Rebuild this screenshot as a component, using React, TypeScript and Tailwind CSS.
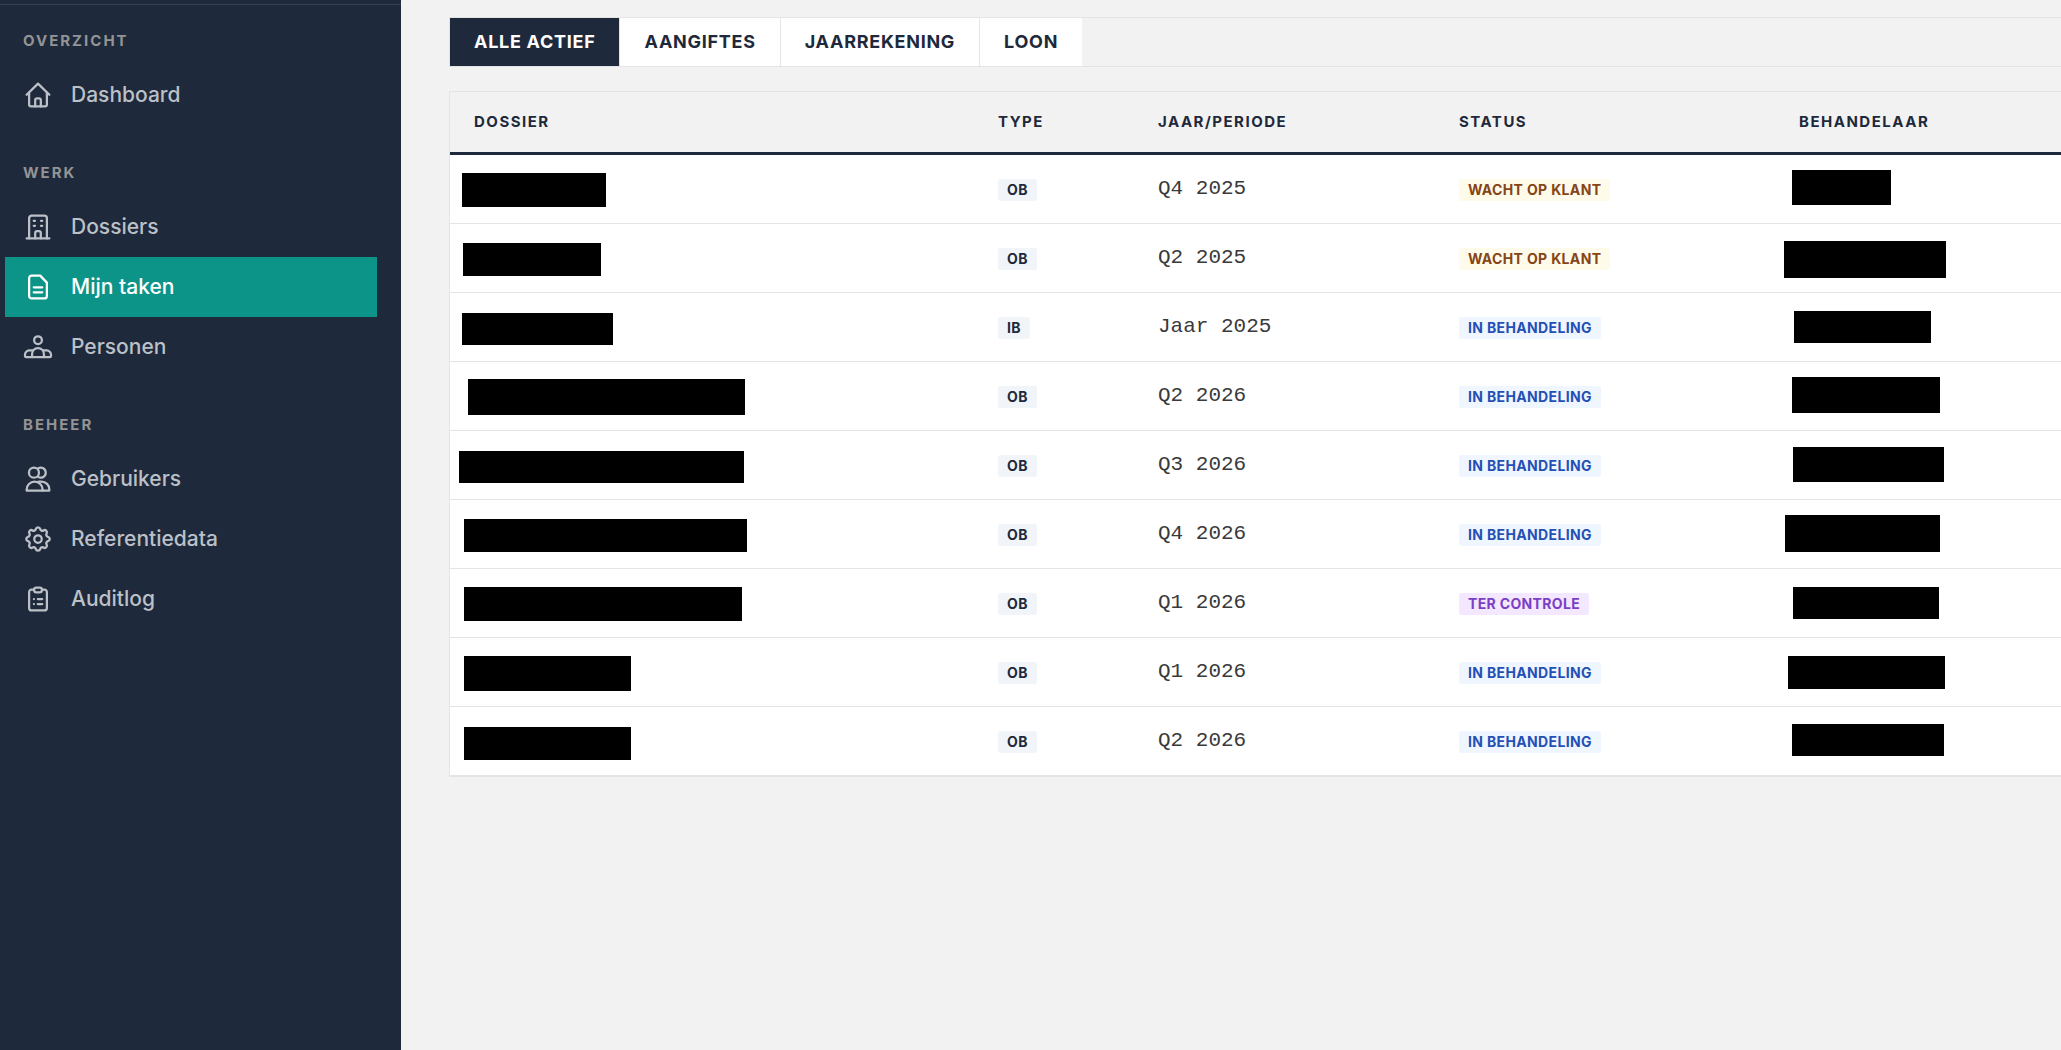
import React, { useState } from 'react';
import clsx from 'clsx';

type Status = 'wacht' | 'behandeling' | 'controle';

// Afgeschermde naam: positie en afmeting binnen de cel
interface Mask {
  left: number;
  top: number;
  width: number;
  height: number;
}

interface Taak {
  id: number;
  type: string;
  periode: string;
  status: Status;
  dossier: Mask;
  behandelaar: Mask;
}

const statusConfig: Record<Status, { label: string; className: string }> = {
  wacht: { label: 'Wacht op klant', className: 'bg-[#fffbeb] text-[#854516]' },
  behandeling: { label: 'In behandeling', className: 'bg-[#eff6ff] text-[#2450b5]' },
  controle: { label: 'Ter controle', className: 'bg-[#f3e8ff] text-[#7a3fc4]' },
};

const mask = (left: number, top: number, width: number, height: number): Mask => ({ left, top, width, height });

const taken: Taak[] = [
  { id: 1, type: 'OB', periode: 'Q4 2025', status: 'wacht', dossier: mask(12, 18, 144, 34), behandelaar: mask(17, 15, 99, 35) },
  { id: 2, type: 'OB', periode: 'Q2 2025', status: 'wacht', dossier: mask(13, 19, 138, 33), behandelaar: mask(9, 17, 162, 37) },
  { id: 3, type: 'IB', periode: 'Jaar 2025', status: 'behandeling', dossier: mask(12, 20, 151, 32), behandelaar: mask(19, 18, 137, 32) },
  { id: 4, type: 'OB', periode: 'Q2 2026', status: 'behandeling', dossier: mask(18, 17, 277, 36), behandelaar: mask(17, 15, 148, 36) },
  { id: 5, type: 'OB', periode: 'Q3 2026', status: 'behandeling', dossier: mask(9, 20, 285, 32), behandelaar: mask(18, 16, 151, 35) },
  { id: 6, type: 'OB', periode: 'Q4 2026', status: 'behandeling', dossier: mask(14, 19, 283, 33), behandelaar: mask(10, 15, 155, 37) },
  { id: 7, type: 'OB', periode: 'Q1 2026', status: 'controle', dossier: mask(14, 18, 278, 34), behandelaar: mask(18, 18, 146, 32) },
  { id: 8, type: 'OB', periode: 'Q1 2026', status: 'behandeling', dossier: mask(14, 18, 167, 35), behandelaar: mask(13, 18, 157, 33) },
  { id: 9, type: 'OB', periode: 'Q2 2026', status: 'behandeling', dossier: mask(14, 20, 167, 33), behandelaar: mask(17, 17, 152, 32) },
];

const Icon: React.FC<{ children: React.ReactNode }> = ({ children }) => (
  <svg
    viewBox="0 0 24 24"
    className="size-[30px] shrink-0"
    fill="none"
    stroke="currentColor"
    strokeWidth={1.8}
    strokeLinecap="round"
    strokeLinejoin="round"
    aria-hidden="true"
  >
    {children}
  </svg>
);

const HomeIcon = () => (
  <Icon>
    <path d="M2.9 11.75 12 2.9l9.1 8.85" />
    <path d="M4.9 10v9.6c0 .83.67 1.5 1.5 1.5h11.2c.83 0 1.5-.67 1.5-1.5V10" />
    <path d="M9.75 21.1v-4.85c0-.83.67-1.5 1.5-1.5h1.5c.83 0 1.5.67 1.5 1.5v4.85" />
  </Icon>
);

const BuildingIcon = () => (
  <Icon>
    <path d="M2.9 21.1h18.2" />
    <path d="M4.9 21.1V4.9a2 2 0 0 1 2-2h10.2a2 2 0 0 1 2 2v16.2" />
    <path d="M9.75 21.1v-4.35c0-.83.67-1.5 1.5-1.5h1.5c.83 0 1.5.67 1.5 1.5v4.35" />
    <path d="M8.6 7h1M14.4 7h1M8.6 11h1M14.4 11h1" />
  </Icon>
);

const PageIcon = () => (
  <Icon>
    <path d="M4.9 4.9a2 2 0 0 1 2-2h6.85l5.35 5.6v10.6a2 2 0 0 1-2 2H6.9a2 2 0 0 1-2-2z" />
    <path d="M8.6 12.25h6.8M8.6 16.25h6.8" />
  </Icon>
);

const PeopleIcon = () => (
  <Icon>
    <circle cx="12" cy="6.5" r="3.1" />
    <path d="M7.25 20.1v-2.5a4.75 4.75 0 0 1 9.5 0v2.5" />
    <path d="M7.5 14.75H5a3.4 3.4 0 0 0-3.4 3.4v.95c0 .55.45 1 1 1h18.8c.55 0 1-.45 1-1v-.95a3.4 3.4 0 0 0-3.4-3.4h-2.5" />
  </Icon>
);

const UsersIcon = () => (
  <Icon>
    <circle cx="8.75" cy="6.9" r="4" />
    <path d="M12.25 3.4a4 4 0 1 1 0 7" />
    <path d="M2.9 21.25v-.75a6.4 6.4 0 0 1 12.8 0v.75z" />
    <path d="M12.5 14h2.2a6.4 6.4 0 0 1 6.4 6.5v.75h-5.4" />
  </Icon>
);

const GearIcon = () => (
  <Icon>
    <circle cx="12" cy="12" r="3" />
    <path
      transform="translate(-.48 -.48) scale(1.04)"
      d="M10.325 4.317c.426-1.756 2.924-1.756 3.35 0a1.724 1.724 0 0 0 2.573 1.066c1.543-.94 3.31.826 2.37 2.37a1.724 1.724 0 0 0 1.065 2.572c1.756.426 1.756 2.924 0 3.35a1.724 1.724 0 0 0-1.066 2.573c.94 1.543-.826 3.31-2.37 2.37a1.724 1.724 0 0 0-2.572 1.065c-.426 1.756-2.924 1.756-3.35 0a1.724 1.724 0 0 0-2.573-1.066c-1.543.94-3.31-.826-2.37-2.37a1.724 1.724 0 0 0-1.065-2.572c-1.756-.426-1.756-2.924 0-3.35a1.724 1.724 0 0 0 1.066-2.573c-.94-1.543.826-3.31 2.37-2.37.996.608 2.296.07 2.572-1.065z"
    />
  </Icon>
);

const ClipboardIcon = () => (
  <Icon>
    <path d="M8.75 4.4H6.9a2 2 0 0 0-2 2v12.7a2 2 0 0 0 2 2h10.2a2 2 0 0 0 2-2V6.4a2 2 0 0 0-2-2h-1.85" />
    <rect x="8.9" y="2.9" width="6.2" height="3.8" rx="1.75" />
    <path d="M8.75 12h.01M11.85 12h3.55M8.75 16h.01M11.85 16h3.55" />
  </Icon>
);

const secties = [
  { titel: 'Overzicht', items: [{ naam: 'Dashboard', icon: HomeIcon }] },
  {
    titel: 'Werk',
    items: [
      { naam: 'Dossiers', icon: BuildingIcon },
      { naam: 'Mijn taken', icon: PageIcon },
      { naam: 'Personen', icon: PeopleIcon },
    ],
  },
  {
    titel: 'Beheer',
    items: [
      { naam: 'Gebruikers', icon: UsersIcon },
      { naam: 'Referentiedata', icon: GearIcon },
      { naam: 'Auditlog', icon: ClipboardIcon },
    ],
  },
];

const tabs = ['Alle actief', 'Aangiftes', 'Jaarrekening', 'Loon'];

const Sidebar: React.FC = () => (
  <aside className="w-[401px] shrink-0 bg-[#1e293b] pt-1">
    <nav className="flex flex-col gap-[39px] border-t border-[#334155] pt-[27px] pr-6 pl-[5px]">
      {secties.map((sectie) => (
        <div key={sectie.titel}>
          <h2 className="mb-[15px] px-[18px] text-[15px] leading-[18px] font-bold tracking-[2px] text-[#949494] uppercase">
            {sectie.titel}
          </h2>
          <ul>
            {sectie.items.map(({ naam, icon: ItemIcon }) => (
              <li key={naam}>
                <a
                  href="#"
                  className={clsx(
                    'flex h-[60px] items-center gap-[18px] px-[18px] text-[21px] font-medium',
                    naam === 'Mijn taken' ? 'bg-[#0d9488] text-white' : 'text-[#bcc0c7]'
                  )}
                >
                  <ItemIcon />
                  {naam}
                </a>
              </li>
            ))}
          </ul>
        </div>
      ))}
    </nav>
  </aside>
);

const MaskedCell: React.FC<{ area: Mask }> = ({ area }) => (
  <td className="relative">
    <span className="absolute bg-black" style={area} />
  </td>
);

const App: React.FC = () => {
  const [activeTab, setActiveTab] = useState(tabs[0]);

  return (
    <div className="flex min-h-screen overflow-x-hidden bg-[#f2f2f2] font-['Inter',sans-serif] text-[#1e293b]">
      <Sidebar />

      <main className="min-w-0 flex-1 pt-[17px] pl-12">
        {/* Filters */}
        <div className="flex border-y border-l border-[#e4e4e4]">
          {tabs.map((tab, index) => (
            <button
              key={tab}
              type="button"
              onClick={() => setActiveTab(tab)}
              className={clsx(
                'h-12 px-6 pb-0.5 text-[18px] font-bold tracking-[0.04em] uppercase',
                index < tabs.length - 1 && 'border-r border-[#e4e4e4]',
                tab === activeTab ? 'bg-[#1e293b] text-white' : 'bg-white'
              )}
            >
              {tab}
            </button>
          ))}
        </div>

        {/* Takenlijst */}
        <div className="mt-6 border-y border-l border-[#e4e4e4] bg-white">
          <table className="w-full table-fixed border-separate border-spacing-0 text-left">
            <thead className="bg-[#f2f2f2] text-[15px] tracking-widest uppercase">
              <tr className="h-[63px] *:border-b-[3px] *:border-[#1e293b] *:px-6 *:font-bold">
                <th className="w-[524px]">Dossier</th>
                <th className="w-[160px]">Type</th>
                <th className="w-[301px]">Jaar/Periode</th>
                <th className="w-[340px]">Status</th>
                <th>Behandelaar</th>
              </tr>
            </thead>
            <tbody>
              {taken.map((taak) => (
                <tr key={taak.id} className="h-[69px] *:border-b *:border-[#e4e4e4] *:px-6">
                  <MaskedCell area={taak.dossier} />
                  <td>
                    <span className="inline-block rounded-xs bg-[#f1f5f9] px-[9px] text-[14px] leading-[22px] font-bold tracking-wide">
                      {taak.type}
                    </span>
                  </td>
                  <td className="font-['Liberation_Mono',monospace] text-[21px] text-[#3a3a3a]">{taak.periode}</td>
                  <td>
                    <span
                      className={clsx(
                        'inline-block rounded-xs px-[9px] text-[14px] leading-[22px] font-bold tracking-wide uppercase',
                        statusConfig[taak.status].className
                      )}
                    >
                      {statusConfig[taak.status].label}
                    </span>
                  </td>
                  <MaskedCell area={taak.behandelaar} />
                </tr>
              ))}
            </tbody>
          </table>
        </div>
      </main>
    </div>
  );
};

export default App;
